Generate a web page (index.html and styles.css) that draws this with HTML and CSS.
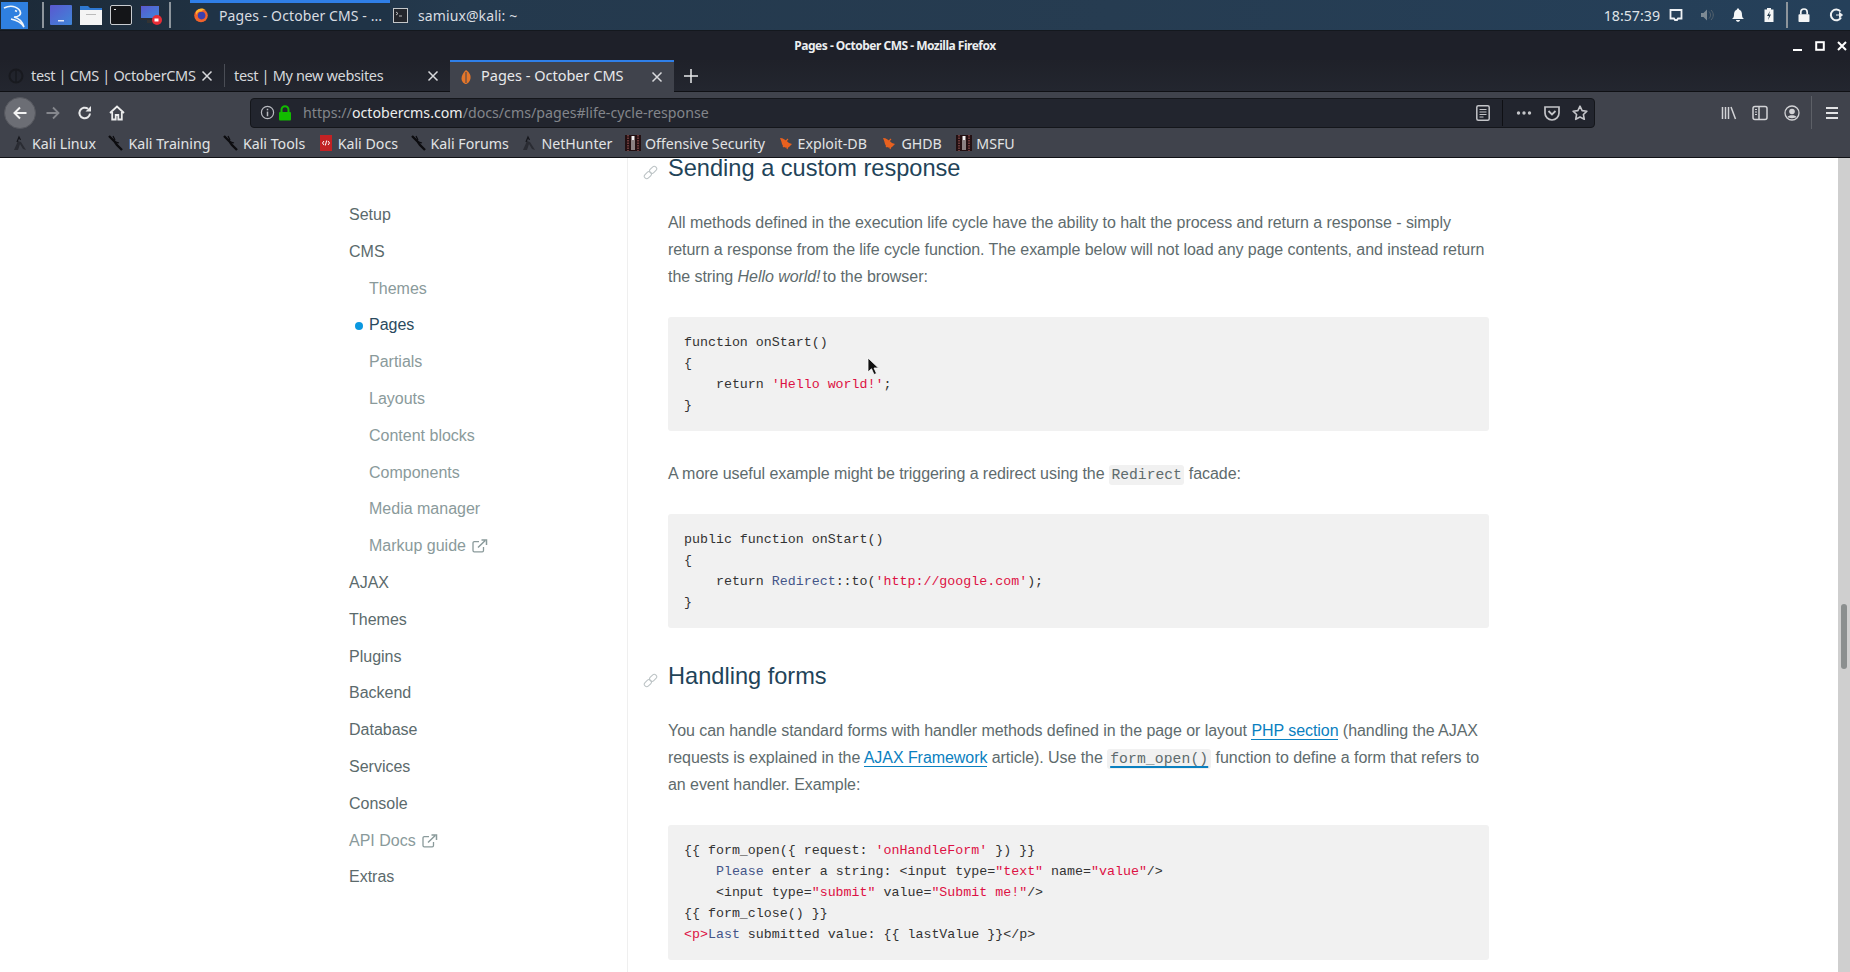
FILE: index.html
```html
<!DOCTYPE html>
<html lang="en">
<head>
<meta charset="utf-8">
<title>Pages - October CMS - Mozilla Firefox</title>
<link rel="stylesheet" href="styles.css">
</head>
<body>
<svg class="defs" width="0" height="0">
  <symbol id="x" viewBox="0 0 12 12"><path d="M1.5 1.5l9 9M10.5 1.5l-9 9" stroke="currentColor" stroke-width="1.5" fill="none"/></symbol>
  <symbol id="fav-ff" viewBox="0 0 16 16"><circle cx="8" cy="8.500" r="6.800" fill="#f0632c"/><circle cx="8.600" cy="8.600" r="3.800" fill="#3a3fb0"/><path d="M3 4.500C5 1 10 .5 13 3c-2-.5-3.500 0-4.500 1.500C6 4 4.500 5 3 8z" fill="#ffb52e"/></symbol>
  <symbol id="fav-oct" viewBox="0 0 16 16"><path d="M8 1c4 2.500 5 6 4.500 8.500C12 12.500 9.500 15 8 15c-2 0-4.500-2.500-4.500-5.500C3.500 6.500 5.500 3 8 1z" fill="#e5762a"/><path d="M8 3v11" stroke="#40434c" stroke-width="1"/></symbol>
  <symbol id="kali" viewBox="0 0 16 16"><path d="M2 15l4-9 3 1 5 8-3-1-3-5-2 6z" fill="#2a2c33"/><path d="M5 7l2-5 1.500 3" fill="none" stroke="#17181d" stroke-width="1.300"/></symbol>
  <symbol id="kali2" viewBox="0 0 16 16"><path d="M1 1l3 3 3 3 2 3 5 5" stroke="#0c0c0f" stroke-width="2.400" fill="none"/><path d="M5 1l2 4M8 7l3 1" stroke="#0c0c0f" stroke-width="1.200"/></symbol>
  <symbol id="offsec" viewBox="0 0 16 16"><rect width="16" height="16" fill="#231012"/><path d="M3 0v16M13 0v16" stroke="#6b3a3a" stroke-width="2" stroke-dasharray="1.500 1"/><path d="M6.500 1h3v14h-1V5H7.500v10h-1z" fill="#f2f2f2"/></symbol>
  <symbol id="bug" viewBox="0 0 16 16"><path d="M2 3c3 0 6 2 9 5l3 1-3 3c-3 2-6 0-7-3C3.500 7 3 5 2 3z" fill="#e8611f"/><path d="M5 12l2-2M9 14l1-3M10 4L8 6" stroke="#e8611f" stroke-width="1.200"/></symbol>
  <symbol id="ext" viewBox="0 0 16 14"><path d="M11.500 8v3.500a1.300 1.300 0 0 1-1.300 1.300H2.300A1.300 1.300 0 0 1 1 11.500V4a1.300 1.300 0 0 1 1.300-1.300H7" fill="none" stroke="currentColor" stroke-width="1.300"/><path d="M6 8.500L13 1.800M9.500 1h5v5" fill="none" stroke="currentColor" stroke-width="1.500"/></symbol>
  <symbol id="chain" viewBox="0 0 16 16"><g fill="none" stroke="currentColor" stroke-width="1.100"><rect x="-4" y="-2.600" width="8.500" height="5.200" rx="2.600" transform="translate(5 11) rotate(-45)"/><rect x="-4.500" y="-2.600" width="8.500" height="5.200" rx="2.600" transform="translate(11 5) rotate(-45)"/></g></symbol>
</svg>

<div class="panel">
  <svg class="kali-start" viewBox="0 0 27 27"><rect width="27" height="27" fill="#2f80e0"/><path d="M3 6c6-3 13-2 16 3 2 4-2 6-6 6 4 1 8 3 10 10-3-5-8-7-13-8M14 8.500l2 1" fill="none" stroke="#f2f6fa" stroke-width="1.600"/></svg>
  <span class="panel-sep first"></span>
  <svg class="launch" viewBox="0 0 22 22"><defs><linearGradient id="lg1" x1="0" y1="0" x2="1" y2="1"><stop offset="0" stop-color="#5a58d0"/><stop offset="1" stop-color="#3f86d8"/></linearGradient></defs><rect width="22" height="20" y="1" rx="1" fill="url(#lg1)"/><rect x="8" y="16" width="6" height="1.500" fill="#dfe6f5"/></svg>
  <svg class="launch" viewBox="0 0 22 22"><path d="M0 2h8l2 2h12v16H0z" fill="#2e78d2"/><rect y="6" width="22" height="15" fill="#f4f4f4"/><rect x="6" y="10" width="10" height="1" fill="#bbb"/></svg>
  <svg class="launch" viewBox="0 0 22 22"><rect x=".5" y="1.500" width="21" height="19" rx="1.500" fill="#141518" stroke="#c9ccd0"/><rect x="4" y="5" width="2" height="1" fill="#ddd"/></svg>
  <svg class="launch" viewBox="0 0 22 22"><rect y="1" width="20" height="15" fill="#2b2d35"/><rect x="1" y="2" width="18" height="12" fill="url(#lg1)"/><rect x="7" y="16" width="6" height="3" fill="#333"/><circle cx="17" cy="16" r="5" fill="#e82c36"/><rect x="14.500" y="14.500" width="4" height="3" fill="#fff"/></svg>
  <span class="panel-sep second"></span>
  <div class="win-btn active">
    <svg class="i16"><use href="#fav-ff"/></svg>
    <span class="win-label">Pages - October CMS - ...</span>
  </div>
  <div class="win-btn">
    <svg class="term" viewBox="0 0 15 15"><rect x=".5" y=".5" width="14" height="14" fill="#23262c" stroke="#c4c7c9"/><path d="M3 4l2 1.500L3 7M6 8h3" stroke="#ddd" fill="none" stroke-width=".8"/></svg>
    <span class="win-label">samiux@kali: ~</span>
  </div>
  <div class="tray">
    <span class="clock">18:57:39</span>
    <svg class="tray-i screen" viewBox="0 0 14 14"><path d="M1.500 2h11v8.500H9L8 12H6l-1-1.500H1.500z" fill="none" stroke="#eef1f4" stroke-width="1.800"/></svg>
    <svg class="tray-i vol" viewBox="0 0 14 14"><path d="M1 5h2.500L7 1.500v11L3.500 9H1z" fill="#7d8a94"/><path d="M9 3.500c2 2 2 5 0 7M11 2c3 3 3 7 0 10" fill="none" stroke="#56636e" stroke-width="1"/></svg>
    <svg class="tray-i bell" viewBox="0 0 14 14"><path d="M7 .5c.8 0 1.200.6 1.200 1.200C10.500 2.500 11 4.500 11 7c0 2 .8 3 2 4H1c1.200-1 2-2 2-4 0-2.500.5-4.500 2.800-5.300C5.800 1.100 6.200.500 7 .5zM5 12h4c0 1-1 1.800-2 1.800S5 13 5 12z" fill="#f5f6f7"/></svg>
    <svg class="tray-i batt" viewBox="0 0 14 14"><path d="M5 0h4v1.500h2.500V14h-9V1.500H5z" fill="#f4f5f6"/><path d="M8 3L5 8h2l-1 4 3-5.500H7z" fill="#22384a"/></svg>
    <span class="panel-sep third"></span>
    <svg class="tray-i lock" viewBox="0 0 14 14"><path d="M3.800 6.500V4.200a3.200 3.200 0 0 1 6.400 0v2.300" fill="none" stroke="#f4f5f6" stroke-width="1.700"/><rect x="1.500" y="6.300" width="11" height="7.700" rx=".8" fill="#f4f5f6"/></svg>
    <svg class="tray-i power" viewBox="0 0 14 14"><path d="M11.500 3.500A5.400 5.400 0 1 0 12 9.500" fill="none" stroke="#f0f2f4" stroke-width="2"/><path d="M7 7h6M10.500 4.500L13.500 7l-3 2.500z" fill="#f0f2f4" stroke="#f0f2f4"/></svg>
  </div>
</div>

<div class="titlebar">
  <span class="win-title">Pages - October CMS - Mozilla Firefox</span>
  <div class="win-controls">
    <svg class="ctl" viewBox="0 0 10 10"><rect x="0" y="8" width="9" height="2" fill="#fff"/></svg>
    <svg class="ctl" viewBox="0 0 10 10"><rect x="1.200" y="1.200" width="7.600" height="7.600" fill="none" stroke="#fff" stroke-width="2"/></svg>
    <svg class="ctl" viewBox="0 0 10 10"><path d="M1 1l8 8M9 1l-8 8" stroke="#fff" stroke-width="2"/></svg>
  </div>
</div>

<div class="tabbar">
  <div class="tab first-tab">
    <svg class="i16 dim" viewBox="0 0 16 16"><circle cx="8" cy="8" r="6.500" fill="none" stroke="#15161a" stroke-width="2"/><path d="M8 2v12" stroke="#15161a" stroke-width="1.500"/></svg>
    <span class="tab-label tight">test | CMS | OctoberCMS</span>
    <svg class="tab-x"><use href="#x"/></svg>
  </div>
  <div class="tab second-tab">
    <span class="tab-label tight">test | My new websites</span>
    <svg class="tab-x"><use href="#x"/></svg>
  </div>
  <div class="tab active-tab">
    <svg class="i16"><use href="#fav-oct"/></svg>
    <span class="tab-label">Pages - October CMS</span>
    <svg class="tab-x"><use href="#x"/></svg>
  </div>
  <svg class="newtab" viewBox="0 0 14 14"><path d="M7 0v14M0 7h14" stroke="#e8e9ea" stroke-width="1.500"/></svg>
</div>

<div class="toolbar">
  <div class="back"><svg class="tb-i" viewBox="0 0 16 16"><path d="M14.500 8H2.500M8 2.500L2.500 8 8 13.500" fill="none" stroke="#f3f3f3" stroke-width="2"/></svg></div>
  <svg class="tb-i forward" viewBox="0 0 16 16"><path d="M1.500 8h12M8 2.500L13.500 8 8 13.500" fill="none" stroke="#85878d" stroke-width="1.800"/></svg>
  <svg class="tb-i reload" viewBox="0 0 16 16"><path d="M13 8.500A5.300 5.300 0 1 1 11 3.800" fill="none" stroke="#e8e9ea" stroke-width="2"/><path d="M14 1v5.500H8.500z" fill="#e8e9ea"/></svg>
  <svg class="tb-i home" viewBox="0 0 16 16"><path d="M1 8l7-6.500L15 8M3.200 7v7.500h3.500V10h2.600v4.500h3.500V7" fill="none" stroke="#eceded" stroke-width="1.800"/></svg>
  <div class="urlbar">
    <svg class="url-i info" viewBox="0 0 16 16"><circle cx="8" cy="8" r="6.500" fill="none" stroke="#b8bac0" stroke-width="1.300"/><rect x="7.200" y="7" width="1.600" height="5" fill="#b8bac0"/><rect x="7.200" y="4" width="1.600" height="1.700" fill="#b8bac0"/></svg>
    <svg class="url-i padlock" viewBox="0 0 14 16"><path d="M3.500 8V4.800a3.500 3.500 0 0 1 7 0V8" fill="none" stroke="#12bc00" stroke-width="2"/><rect x="1" y="7" width="12" height="8.500" rx="1" fill="#12bc00"/></svg>
    <span class="url"><span class="u-dim">https://</span><span class="u-host">octobercms.com</span><span class="u-dim">/docs/cms/pages#life-cycle-response</span></span>
    <svg class="url-i reader" viewBox="0 0 14 16"><rect x=".8" y=".8" width="12.400" height="14.400" rx="1.500" fill="none" stroke="#c4c5c9" stroke-width="1.500"/><path d="M3.500 4.500h7M3.500 7h7M3.500 9.500h7M3.500 12h4" stroke="#c4c5c9" stroke-width="1.200"/></svg>
    <span class="url-sep"></span>
    <svg class="url-i dots" viewBox="0 0 16 4"><circle cx="2.500" cy="2" r="1.700" fill="#c4c5c9"/><circle cx="8" cy="2" r="1.700" fill="#c4c5c9"/><circle cx="13.500" cy="2" r="1.700" fill="#c4c5c9"/></svg>
    <svg class="url-i pocket" viewBox="0 0 16 16"><path d="M1 2h14v6a7 7 0 0 1-14 0z" fill="none" stroke="#c4c5c9" stroke-width="1.700"/><path d="M4.500 6L8 9.500 11.500 6" fill="none" stroke="#c4c5c9" stroke-width="1.800"/></svg>
    <svg class="url-i star" viewBox="0 0 16 16"><path d="M8 1.200l2.100 4.400 4.800.6-3.500 3.300.9 4.800L8 12l-4.300 2.300.9-4.800L1.100 6.200l4.800-.6z" fill="none" stroke="#c4c5c9" stroke-width="1.600" stroke-linejoin="round"/></svg>
  </div>
  <svg class="tb-i library" viewBox="0 0 16 16"><path d="M1.500 2v12M4.500 2v12M7.500 2v12M10 2l4.500 12" stroke="#d2d3d6" stroke-width="1.500" fill="none"/></svg>
  <svg class="tb-i sidebar" viewBox="0 0 16 16"><rect x="1" y="1.500" width="14" height="13" rx="2" fill="none" stroke="#d2d3d6" stroke-width="1.500"/><path d="M7 1.500v13" stroke="#d2d3d6" stroke-width="1.500"/><path d="M3 4.500h2M3 7h2M3 9.500h2" stroke="#d2d3d6"/></svg>
  <svg class="tb-i account" viewBox="0 0 16 16"><circle cx="8" cy="8" r="7" fill="none" stroke="#d2d3d6" stroke-width="1.300"/><circle cx="8" cy="6.500" r="2.800" fill="#d2d3d6"/><path d="M3.500 12c1-2.500 8-2.500 9 0-1.500 1.500-7.500 1.500-9 0z" fill="#d2d3d6"/></svg>
  <span class="tb-sep"></span>
  <svg class="tb-i burger" viewBox="0 0 16 16"><path d="M2 3h12M2 8h12M2 13h12" stroke="#e2e3e5" stroke-width="2"/></svg>
</div>

<div class="bookmarks">
  <span class="bm"><svg class="i16"><use href="#kali"/></svg>Kali Linux</span>
  <span class="bm"><svg class="i16"><use href="#kali2"/></svg>Kali Training</span>
  <span class="bm"><svg class="i16"><use href="#kali2"/></svg>Kali Tools</span>
  <span class="bm"><svg class="i16" viewBox="0 0 16 16"><rect x="2" width="12" height="16" fill="#c22224"/><path d="M6 6L4.500 8 6 10M10 6l1.500 2L10 10M8.700 5.500L7.300 10.500" stroke="#fff" fill="none"/></svg>Kali Docs</span>
  <span class="bm"><svg class="i16"><use href="#kali2"/></svg>Kali Forums</span>
  <span class="bm"><svg class="i16"><use href="#kali"/></svg>NetHunter</span>
  <span class="bm"><svg class="i16"><use href="#offsec"/></svg>Offensive Security</span>
  <span class="bm"><svg class="i16"><use href="#bug"/></svg>Exploit-DB</span>
  <span class="bm bm-wide"><svg class="i16"><use href="#bug"/></svg>GHDB</span>
  <span class="bm bm-wide"><svg class="i16"><use href="#offsec"/></svg>MSFU</span>
</div>

<div class="viewport">
  <div class="page">
    <nav class="side">
      <a class="top">Setup</a>
      <a class="top">CMS</a>
      <a class="sub">Themes</a>
      <a class="sub current">Pages</a>
      <a class="sub">Partials</a>
      <a class="sub">Layouts</a>
      <a class="sub">Content blocks</a>
      <a class="sub">Components</a>
      <a class="sub">Media manager</a>
      <a class="sub">Markup guide <svg class="ext"><use href="#ext"/></svg></a>
      <a class="top">AJAX</a>
      <a class="top">Themes</a>
      <a class="top">Plugins</a>
      <a class="top">Backend</a>
      <a class="top">Database</a>
      <a class="top">Services</a>
      <a class="top">Console</a>
      <a class="top faded">API Docs <svg class="ext"><use href="#ext"/></svg></a>
      <a class="top">Extras</a>
    </nav>
    <main class="doc">
      <h2 class="h-first"><svg class="chain"><use href="#chain"/></svg>Sending a custom response</h2>
      <p>All methods defined in the execution life cycle have the ability to halt the process and return a response - simply return a response from the life cycle function. The example below will not load any page contents, and instead return the string <em>Hello world!</em> to the browser:</p>
<pre class="code c1">function onStart()
{
    return <b class="s">'Hello world!'</b>;
}</pre>
      <p class="p2">A more useful example might be triggering a redirect using the <code>Redirect</code> facade:</p>
<pre class="code c2">public function onStart()
{
    return <b class="t">Redirect</b>::to(<b class="s">'http://google.com'</b>);
}</pre>
      <h2 class="h-second"><svg class="chain"><use href="#chain"/></svg>Handling forms</h2>
      <p class="p3">You can handle standard forms with handler methods defined in the page or layout <a class="lnk">PHP section</a> (handling the AJAX requests is explained in the <a class="lnk">AJAX Framework</a> article). Use the <code class="code-link">form_open()</code> function to define a form that refers to an event handler. Example:</p>
<pre class="code c3">{{ form_open({ request: <b class="s">'onHandleForm'</b> }) }}
    <b class="t">Please</b> enter a string: &lt;input type=<b class="s">"text"</b> name=<b class="s">"value"</b>/&gt;
    &lt;input type=<b class="s">"submit"</b> value=<b class="s">"Submit me!"</b>/&gt;
{{ form_close() }}
<b class="s">&lt;p&gt;</b><b class="t">Last</b> submitted value: {{ lastValue }}&lt;/p&gt;</pre>
    </main>
  </div>
  <div class="scrollbar"><div class="thumb"></div></div>
  <svg class="cursor" viewBox="0 0 12 19"><path d="M1 1v14l3.500-3.200L7 17.500l2.500-1L7 11h4.500z" fill="#111" stroke="#fff" stroke-width=".8"/></svg>
</div>
</body>
</html>
```

FILE: styles.css
```css
* { box-sizing: border-box; }
html, body { margin: 0; padding: 0; height: 972px; overflow: hidden; background: #fff; }
body { display: flex; flex-direction: column; font-family: "Noto Sans", sans-serif; }
.defs { position: absolute; }
svg { display: block; flex: none; }
.i16 { width: 16px; height: 16px; }

/* desktop panel */
.panel {
  height: 31px; display: flex; align-items: center; flex: none;
  background: linear-gradient(90deg, #1c2a38 0, #24394d 25%, #263c51 60%, #25405a 100%);
  border-bottom: 1px solid #14181e; color: #e4e7ea; font-size: 14px;
}
.kali-start { width: 27px; height: 27px; margin-left: 1px; }
.panel-sep { width: 2px; height: 26px; background: #8d959c; flex: none; }
.panel-sep.first { margin: 0 6px 0 14px; }
.panel-sep.third { margin: 0 9px 0 10px; }
.launch { width: 22px; height: 22px; margin-right: 8px; }
.launch + .panel-sep { margin: 0 19px 0 -1px; }
.win-btn { height: 30px; display: flex; align-items: center; gap: 9px; padding-left: 3px; color: #d9dde1; letter-spacing: .1px; }
.win-btn.active { width: 200px; gap: 10px; background: #1f3346; border-top: 3px solid #2f7fe8; padding-bottom: 3px; }
.term { width: 15px; height: 15px; margin-right: 1px; }
.win-label { white-space: nowrap; }
.tray { margin-left: auto; display: flex; align-items: center; padding-right: 7px; }
.clock { margin-right: 9px; color: #dfe3e7; font-size: 14.200px; }
.tray-i { width: 14px; height: 14px; margin-right: 17px; }
.tray .lock { margin-right: 18px; width: 14px; height: 16px; }
.tray .power { margin-right: 0; }
.tray .batt { margin-right: 0; }

/* window title */
.titlebar { height: 29px; flex: none; background: #1e2029; display: flex; align-items: center; justify-content: center; position: relative; padding-right: 60px; }
.win-title { font-size: 12px; font-weight: 700; color: #eceef0; letter-spacing: -.5px; }
.win-controls { position: absolute; right: 3px; top: 10px; display: flex; gap: 12px; }
.ctl { width: 10px; height: 10px; }

/* tabs */
.tabbar { height: 32px; flex: none; display: flex; align-items: stretch; background: linear-gradient(#1f2129, #23262f); border-bottom: 1px solid #0f1014; font-size: 14.500px; color: #d6d8db; }
.tab { display: flex; align-items: center; position: relative; white-space: nowrap; }
.tab-label { margin-top: -2px; }
.active-tab .tab-label { margin-top: -4px; }
.tight { letter-spacing: -.35px; }
.first-tab { width: 224px; padding-left: 8px; gap: 7px; }
.second-tab { width: 226px; padding-left: 9px; border-left: 1px solid #4a4d55; margin-top: 4px; margin-bottom: 4px; }
.active-tab { width: 224px; padding-left: 8px; gap: 7px; background: #40434c; border-top: 2px solid #2f7fe8; color: #e8e9eb; margin-bottom: -1px; }
.tab-x { position: absolute; right: 11px; top: 50%; margin-top: -6px; width: 12px; height: 12px; color: #d8d9dc; }
.dim { opacity: .7; }
.newtab { width: 14px; height: 14px; margin: 9px 0 0 10px; }

/* toolbar */
.toolbar { height: 37px; flex: none; background: #40434c; display: flex; align-items: center; padding: 4px 0 0 4px; }
.back { width: 32px; height: 32px; border-radius: 50%; background: #6c6e75; display: flex; align-items: center; justify-content: center; border: 1px solid #55575e; }
.tb-i { width: 16px; height: 16px; }
.forward { margin-left: 9px; }
.reload { margin-left: 16px; }
.home { margin-left: 16px; }
.urlbar { width: 1345px; height: 30px; margin-left: 125px; background: #22252e; border: 1px solid #14161b; border-radius: 4px; display: flex; align-items: center; padding-left: 9px; font-size: 14.200px; }
.url-i { width: 15px; height: 15px; }
.padlock { margin-left: 3px; width: 14px; height: 16px; }
.url { margin-left: 11px; flex: 1; white-space: nowrap; }
.u-dim { color: #83858b; }
.u-host { color: #eceded; }
.reader { width: 14px; height: 16px; }
.url-sep { width: 1px; height: 26px; background: #0f1014; margin: 0 13px 0 12px; }
.dots { width: 16px; height: 4px; }
.pocket { width: 16px; height: 16px; margin-left: 12px; }
.star { width: 16px; height: 16px; margin-left: 12px; margin-right: 6px; }
.library { margin-left: 126px; }
.sidebar { margin-left: 15px; }
.account { margin-left: 16px; }
.tb-sep { width: 1px; height: 34px; background: #5d6067; margin-left: 11px; }
.burger { margin-left: 12px; }

/* bookmarks */
.bookmarks { height: 29px; flex: none; background: #40434c; border-bottom: 1px solid #111216; display: flex; align-items: center; padding: 0 0 0 12px; gap: 12.500px; color: #e2e3e5; font-size: 14.200px; }
.bm { display: flex; align-items: center; gap: 4px; white-space: nowrap; }
.bm-wide { margin-left: 2px; }

/* page */
.viewport { flex: 1; display: flex; min-height: 0; position: relative; overflow: hidden; }
.page { flex: 1; display: grid; grid-template-columns: 628px 861px; align-items: start; font-family: "Liberation Sans", Arial, sans-serif; font-size: 16px; }
.side { border-right: 1px solid #efefef; height: 814px; padding: 38.600px 0 0 349px; display: flex; flex-direction: column; }
.side a { display: flex; align-items: center; gap: 6px; height: 36.800px; flex: none; color: #5b6a6c; white-space: nowrap; }
.side .sub { padding-left: 20px; color: #8a9a9b; position: relative; }
.side .faded { color: #8a9a9b; }
.side .current { color: #2a4a5e; }
.current::before { content: ""; position: absolute; left: 6px; top: 15px; width: 8px; height: 8px; border-radius: 50%; background: #0a98e0; }
.ext { width: 16px; height: 14px; color: #8a9a9b; }
.doc { padding-left: 40px; color: #5e6b6d; line-height: 27px; letter-spacing: -.06px; }
.doc h2 { margin: 0; font-size: 23.600px; font-weight: 400; color: #1f4459; line-height: 30px; position: relative; letter-spacing: 0; }
.chain { position: absolute; left: -25px; top: 12px; width: 15px; height: 15px; color: #bcc3c5; }
.h-first { margin-top: -5px !important; }
.doc p { margin: 0; }
.h-first + p { margin-top: 26px; }
.doc em { margin-right: -2px; }
.code { margin: 27px 0 0; background: #f1f1f1; border-radius: 3px; padding: 15px 17px 15px 16px; font-family: "Liberation Mono", monospace; font-size: 13.300px; line-height: 21px; letter-spacing: 0; color: #333; white-space: pre; }
.code b { font-weight: 400; }
.code .s { color: #dd1144; }
.code .t { color: #445588; }
.doc .p2 { margin-top: 29px; }
.doc .h-second { margin-top: 33px; }
.doc .p3 { margin-top: 26px; }
code { font-family: "Liberation Mono", monospace; font-size: 14.700px; line-height: 1; letter-spacing: 0; background: #f1f1f1; padding: 2px 2.500px; border-radius: 3px; color: #5e6b6d; }
.code-link { letter-spacing: .1px; padding: 2px 3px; text-decoration: underline; text-decoration-color: #0a80c0; text-decoration-thickness: 1.500px; text-underline-offset: 3px; }
.lnk { color: #0a80c0; text-decoration: none; border-bottom: 1px solid #0a80c0; }

.scrollbar { width: 12px; flex: none; background: #cfcfcf; position: relative; }
.thumb { position: absolute; left: 3px; top: 446px; width: 6px; height: 65px; border-radius: 3px; background: #8b8f8f; }
.cursor { position: absolute; left: 867px; top: 199px; width: 12px; height: 19px; }
```
